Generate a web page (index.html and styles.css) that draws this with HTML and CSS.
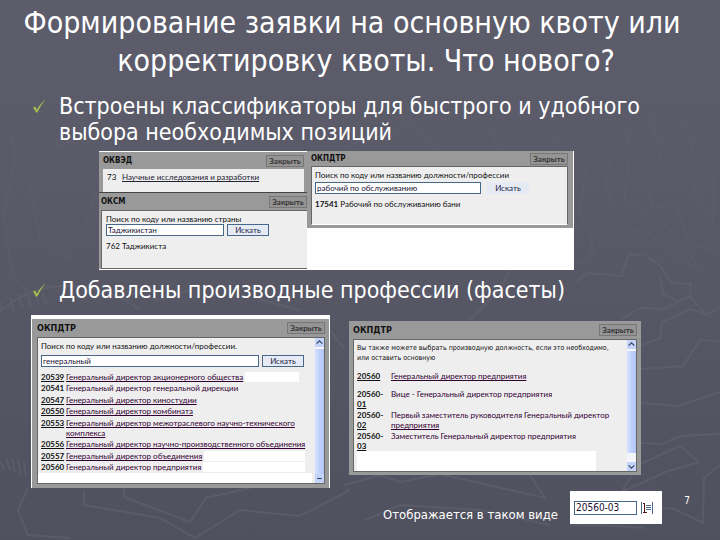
FILE: index.html
```
<!DOCTYPE html>
<html lang="ru">
<head>
    <meta charset="UTF-8">
    <meta name="viewport" content="width=device-width, initial-scale=1.0">
    <title>Формирование заявки на основную квоту</title>
    <link rel="stylesheet" href="styles.css">
</head>
<body>
    <svg class="map" viewBox="0 0 720 540" preserveAspectRatio="none" aria-hidden="true">
        <g class="faint">
            <path d="M12 135L15 158L30 182L55 148L78 138M30 185L40 240L72 260M15 158L4 215L12 275L30 295M97 192L86 218L95 230M340 148L410 126L440 150M490 130L500 150M551 128L556 150"/>
            <path d="M612 150L606 185L622 228L650 233L680 260L702 270L668 227L650 215L624 202L630 155L625 125M648 115L662 150L649 195L652 207L676 205L689 243L720 252M684 118L693 150L694 193L713 222L715 150M575 160L586 165L580 212L592 240L592 260L575 264"/>
        </g>
        <path d="M575 282L588 273L622 276L628 256L644 254L660 266L672 283L691 284L690 297L678 301L664 295L659 277M622 319L640 308L664 309L690 296L706 315L720 307M641 345L660 338L662 322L690 309L708 315M641 369L683 366L700 340L720 341M641 403L678 406L720 392M641 443L662 444L680 436L720 434M470 320L500 290L510 270M400 280L440 300M250 285L262 300L300 310M330 330L345 350"/>
        <path d="M0 312C40 275 100 280 140 310M120 290L160 300L190 290M84 490L84 505L160 518L195 538L240 510L300 516L350 490M28 488L18 510L28 535L70 538M124 484L124 497L190 522L206 498L250 488M345 485L380 475L400 482L440 474L545 498L520 460M365 520L400 505L480 510L550 525M622 490L640 464L680 446L699 462L665 472L640 484L620 492M662 525L650 510L672 508L703 523L704 478L720 465M570 525L620 526L644 528"/>
        <path d="M0 460l4 10M6 458l4 12M12 458l3 14M18 460l3 14M24 462l2 14M2 302l-2 8M10 298l4 14M18 294l5 14M26 292l5 14M34 291l5 14M42 292l4 12"/>
    </svg>

    <main class="slide">
        <h1>Формирование заявки на основную квоту или<br>корректировку квоты. Что нового?</h1>

        <section>
            <div class="point">
                <svg class="check" viewBox="0 0 13 14" aria-hidden="true"><path d="M0 8.500L2 7.500L4 10.500C6 6.500 9 3 13 0.500C9 4.500 6.500 9 4.500 13.500L3 13.500Z"/></svg>
                <h2>Встроены классификаторы для быстрого и удобного выбора необходимых позиций</h2>
            </div>

            <div class="collage">
                <div class="collage-left">
                    <div class="panel okved">
                        <header><h3>ОКВЭД</h3><button class="close">Закрыть</button></header>
                        <div class="body">
                            <p><span class="num">73</span><a href="#">Научные исследования и разработки</a></p>
                        </div>
                    </div>
                    <div class="panel oksm">
                        <header><h3>ОКСМ</h3><button class="close">Закрыть</button></header>
                        <div class="body">
                            <label for="country">Поиск по коду или названию страны</label>
                            <div class="search">
                                <input id="country" type="text" value="Таджикистан">
                                <button class="find">Искать</button>
                            </div>
                            <p>762 Таджикиста</p>
                        </div>
                    </div>
                </div>
                <div class="panel okpdtr">
                    <header><h3>ОКПДТР</h3><button class="close">Закрыть</button></header>
                    <div class="body">
                        <label for="job">Поиск по коду или названию должности/профессии</label>
                        <div class="search">
                            <input id="job" type="text" value="рабочий по обслуживанию">
                            <button class="find">Искать</button>
                        </div>
                        <p><b>17541</b> Рабочий по обслуживанию бани</p>
                    </div>
                </div>
            </div>
        </section>

        <section>
            <div class="point second">
                <svg class="check" viewBox="0 0 13 14" aria-hidden="true"><path d="M0 8.500L2 7.500L4 10.500C6 6.500 9 3 13 0.500C9 4.500 6.500 9 4.500 13.500L3 13.500Z"/></svg>
                <h2>Добавлены производные профессии (фасеты)</h2>
            </div>

            <div class="facets">
                <div class="panel base">
                    <header><h3>ОКПДТР</h3><button class="close">Закрыть</button></header>
                    <div class="body scrolled">
                        <div class="content">
                            <label for="prof">Поиск по коду или названию должности/профессии.</label>
                            <div class="search">
                                <input id="prof" type="text" value="генеральный">
                                <button class="find">Искать</button>
                            </div>
                            <ul class="results">
                                <li><b>20539</b><a href="#">Генеральный директор акционерного общества</a><i class="blank"></i></li>
                                <li class="plain"><b>20541</b><a href="#">Генеральный директор генеральной дирекции</a></li>
                                <li><b>20547</b><a href="#">Генеральный директор киностудии</a></li>
                                <li><b>20550</b><a href="#">Генеральный директор комбината</a></li>
                                <li><b>20553</b><a href="#">Генеральный директор межотраслевого научно-технического<br>комплекса</a></li>
                                <li><b>20556</b><a href="#">Генеральный директор научно-производственного объединения</a></li>
                                <li><b>20557</b><a href="#">Генеральный директор объединения</a><i class="blank wide"></i></li>
                                <li class="plain"><b>20560</b><a href="#">Генеральный директор предприятия</a><i class="blank wide"></i></li>
                            </ul>
                            <div class="cover"></div>
                        </div>
                        <div class="scrollbar">
                            <svg viewBox="0 0 8 8"><path d="M1.500 5L4 2.500L6.500 5"/></svg>
                            <span class="thumb"></span>
                            <svg viewBox="0 0 8 8"><path d="M2 4H6"/></svg>
                        </div>
                    </div>
                </div>

                <div class="panel derived">
                    <header><h3>ОКПДТР</h3><button class="close">Закрыть</button></header>
                    <div class="body scrolled">
                        <div class="content">
                            <p>Вы также можете выбрать производную должность, если это необходимо,<br>или оставить основную</p>
                            <ul class="results">
                                <li class="first"><b>20560</b><a href="#">Генеральный директор предприятия</a></li>
                                <li class="plain"><b>20560-<br><u>01</u></b><a href="#">Вице - Генеральный директор предприятия</a></li>
                                <li class="plain"><b>20560-<br><u>02</u></b><a href="#">Первый заместитель руководителя Генеральный директор<br><u>предприятия</u></a></li>
                                <li class="plain"><b>20560-<br><u>03</u></b><a href="#">Заместитель Генеральный директор предприятия</a></li>
                            </ul>
                            <div class="cover"></div>
                        </div>
                        <div class="scrollbar">
                            <svg viewBox="0 0 8 8"><path d="M1.500 5L4 2.500L6.500 5"/></svg>
                            <span class="thumb"></span>
                            <svg viewBox="0 0 8 8"><path d="M1.500 3L4 5.500L6.500 3"/></svg>
                        </div>
                    </div>
                </div>
            </div>
        </section>

        <footer>
            <label class="caption" for="code">Отображается в таком виде</label>
            <div class="field">
                <input id="code" type="text" value="20560-03">
                <button class="pick" aria-label="Выбрать из списка">
                    <svg viewBox="0 0 12 12"><path class="edge" d="M.5 0V12M11.500 0V12"/><path class="one" d="M2 1.500H4M3.500 1V10M2 10.500H6"/><path class="rows" d="M5 3.500H10M5 5.500H10M5 7.500H10"/></svg>
                </button>
            </div>
            <span class="page">7</span>
        </footer>
    </main>
</body>
</html>
```
FILE: styles.css
```
* {
    box-sizing: border-box;
}
body {
    margin: 0;
    min-height: 100vh;
    position: relative;
    background: linear-gradient(#5c5c6b, #5a5a69 30%, #50515e);
    color: white;
    font-family: "DejaVu Sans Condensed", "DejaVu Sans", sans-serif;
    font-stretch: condensed;
}
h1, h2, h3, p, ul {
    margin: 0;
    padding: 0;
    font-weight: normal;
}
.map {
    position: absolute;
    inset: 0;
    width: 100%;
    height: 100%;
    fill: none;
    stroke: #656672;
    stroke-width: 2;
    opacity: 0.5;
}
.faint {
    opacity: 0.5;
}
.slide {
    position: relative;
    padding: 4px 0 0;
}
h1 {
    padding-left: 12px;
    font-size: 30px;
    line-height: 38px;
    text-align: center;
    text-indent: -28px;
    white-space: nowrap;
}

/* пункты списка */
.point {
    display: flex;
    align-items: flex-start;
    gap: 13px;
    padding: 13px 60px 0 33px;
}
.point.second {
    padding-top: 7px;
}
.check {
    flex: none;
    width: 13px;
    height: 14px;
    margin-top: 6px;
    fill: #9fb94e;
}
h2 {
    font-size: 23px;
    line-height: 26px;
}

/* окна классификаторов */
.panel {
    display: flex;
    flex-direction: column;
    background: #999;
    color: #111;
    font-family: Lato, "Liberation Sans", Arial, sans-serif;
    font-stretch: normal;
    font-size: 8px;
    line-height: 10px;
}
.panel header {
    display: flex;
    justify-content: space-between;
    align-items: center;
    height: 17px;
}
h3 {
    font-family: "DejaVu Sans Condensed", "DejaVu Sans", sans-serif;
    font-stretch: condensed;
    font-size: 9px;
    font-weight: bold;
    line-height: 12px;
}
.collage h3 {
    font-size: 8px;
}
.body {
    flex: 1 0 auto;
    background: #eee;
    border: 1px solid #666;
    border-bottom: 0;
    padding: 4px;
}
a {
    color: #223;
}
button, input {
    font-family: inherit;
    font-stretch: inherit;
    font-size: 8px;
    line-height: 10px;
    margin: 0;
    padding: 0;
}
.close {
    width: 38px;
    height: 12px;
    background: #949494;
    border: 1px solid #777;
    color: #333;
    font-weight: bold;
}
.panel label {
    display: block;
}
.search {
    display: flex;
    gap: 3px;
    height: 12px;
}
input {
    min-width: 0;
    border: 1px solid #47688a;
    background: white;
    color: #213;
    padding: 0 1px;
}
.find {
    width: 42px;
    background: #e6eaf5;
    border: 1px solid #47688a;
    color: #224;
}

.collage {
    display: grid;
    grid-template-columns: minmax(0, 208fr) minmax(0, 267fr);
    margin: 6px 146px 0 99px;
    min-height: 119px;
    background: white;
    align-items: start;
}
.collage-left {
    padding: 1px 0;
}
.okved header {
    padding: 0 3px 0 4px;
}
.okved .body {
    margin: 0 3px 0 4px;
    padding-top: 3px;
    border: 0;
    min-height: 23px;
}
.okved {
    border-bottom: 1px solid #444;
}
.num {
    display: inline-block;
    width: 15px;
}
.oksm header {
    padding-left: 2px;
}
.oksm .body {
    margin-left: 2px;
    padding-top: 3px;
    padding-bottom: 17px;
    border-right: 0;
    border-bottom: 1px solid #666;
}
.oksm input {
    width: 118px;
}
.oksm p, .okpdtr p {
    padding-top: 5px;
}
.okpdtr {
    padding: 0 5px 3px 4px;
    border-right: 1px solid white;
}
.okpdtr header {
    height: 15px;
}
.okpdtr .body {
    padding: 3px 3px 15px;
    border-bottom: 1px solid white;
}
.okpdtr label {
    margin-bottom: 2px;
}
.okpdtr .search {
    gap: 6px;
}
.okpdtr input {
    width: 166px;
}
.okpdtr .find {
    border-color: #e6eaf5;
}

.facets {
    display: grid;
    grid-template-columns: minmax(0, 299fr) minmax(0, 292fr);
    align-items: start;
    gap: 19px;
    margin: 12px 79px 0 31px;
}
.base {
    border: solid white;
    border-width: 4px 1px 0;
    padding: 0 4px 4px 5px;
}
.base header {
    height: 18px;
}
.derived {
    margin-top: 6px;
    padding: 0 4px 3px;
}
.derived header {
    height: 18px;
}
.scrolled {
    display: flex;
    padding: 0;
    border-bottom: 1px solid #666;
}
.content {
    flex: 1;
    min-width: 0;
    display: flex;
    flex-direction: column;
    padding: 3px 0 0 3px;
}
.content p {
    font-family: "DejaVu Sans Condensed", "DejaVu Sans", sans-serif;
    font-stretch: condensed;
    font-size: 7px;
    white-space: nowrap;
}
.base label {
    margin-bottom: 4px;
}
.base input {
    flex: 1;
}
.base .search {
    margin-right: 11px;
}
.results {
    list-style: none;
}
.results li {
    display: flex;
    gap: 2px;
    padding-top: 1px;
}
.base li:nth-child(even) {
    padding-bottom: 1px;
}
.results b {
    flex: none;
    width: 23px;
}
.results li:not(.plain) b {
    text-decoration: underline;
}
.results a {
    color: #303;
    white-space: nowrap;
}
.plain a {
    text-decoration: none;
}
.base .results {
    padding-top: 4px;
}
.blank {
    width: 54px;
    background: white;
}
.blank.wide {
    flex: 1;
    margin-right: 10px;
}
.cover {
    height: 10px;
    margin: 0 3px 0 -3px;
    background: white;
}
.scrollbar {
    flex: none;
    display: flex;
    flex-direction: column;
    width: 9px;
    background: #f4f5fa;
}
.scrollbar svg {
    height: 9px;
    background: #c3d3fb;
    fill: none;
    stroke: #345;
}
.thumb {
    flex: 1;
    margin-top: 2px;
    background: linear-gradient(90deg, #d5e1ff, #aec4f6);
}
.derived .thumb {
    margin-bottom: 9px;
}
.derived .results {
    padding-top: 7px;
}
.derived .results b {
    width: 32px;
}
.derived .first {
    padding-bottom: 7px;
}
.derived .cover {
    height: 20px;
    margin: 0 31px 0 0;
}

footer {
    display: flex;
    align-items: flex-start;
    padding: 3px 30px 0 383px;
}
.caption {
    flex: none;
    padding-top: 14px;
    font-size: 13px;
    line-height: 20px;
}
.field {
    display: flex;
    align-items: center;
    gap: 4px;
    width: 92px;
    height: 33px;
    margin-left: auto;
    padding: 0 4px;
    background: white;
}
.field input {
    width: 63px;
    height: 14px;
    font-size: 10px;
}
.pick {
    width: 12px;
    height: 12px;
    border: 0;
    background: none;
}
.pick svg {
    display: block;
    width: 12px;
    height: 12px;
    fill: none;
}
.edge, .rows {
    stroke: #47688a;
}
.one {
    stroke: #511;
}
.page {
    width: 28px;
    padding-top: 3px;
    font-size: 10px;
    line-height: 14px;
    text-align: right;
}
```
